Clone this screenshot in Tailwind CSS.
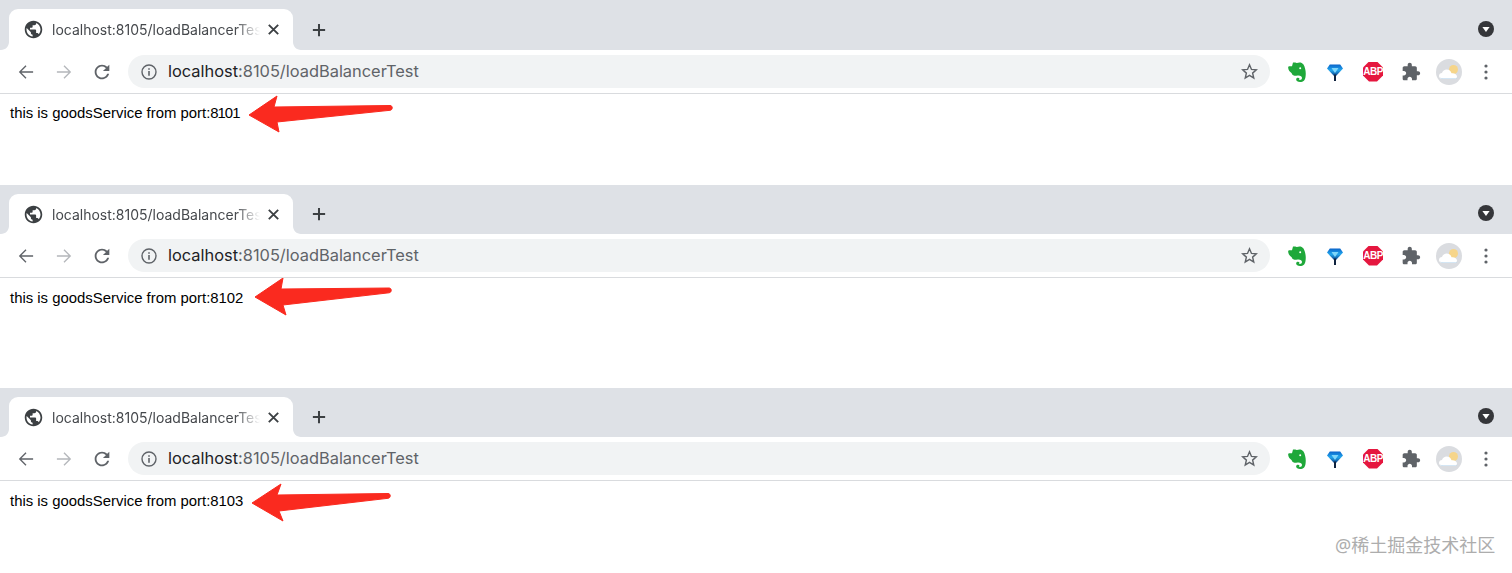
<!DOCTYPE html>
<html lang="en">

<head>
  <meta charset="UTF-8" />
  <meta name="viewport" content="width=device-width, initial-scale=1" />
  <title>loadBalancerTest</title>
  <script src="https://cdn.jsdelivr.net/npm/@tailwindcss/browser@4"></script>
</head>

<body class="relative bg-white h-[573px] overflow-hidden font-['Inter','Noto_Sans',sans-serif]">

  <!-- shared icons -->
  <svg class="absolute w-0 h-0" xmlns="http://www.w3.org/2000/svg">
    <defs><linearGradient id="g-diamond" x1="0" y1="0" x2="0" y2="1"><stop offset="0" stop-color="#0a63c9"/><stop offset=".5" stop-color="#22a7ee"/><stop offset="1" stop-color="#0b3f86"/></linearGradient></defs>
    <symbol id="i-globe" viewBox="0 0 24 24"><path fill="#3c4043" d="M12 2C6.48 2 2 6.48 2 12s4.48 10 10 10 10-4.48 10-10S17.52 2 12 2zm-1 17.93c-3.95-.49-7-3.85-7-7.93 0-.62.08-1.21.21-1.79L9 15v1c0 1.1.9 2 2 2v1.93zm6.9-2.54c-.26-.81-1-1.39-1.9-1.39h-1v-3c0-.55-.45-1-1-1H8v-2h2c.55 0 1-.45 1-1V7h2c1.1 0 2-.9 2-2v-.41c2.93 1.19 5 4.06 5 7.41 0 2.08-.8 3.97-2.1 5.39z"/></symbol>
    <symbol id="i-close" viewBox="0 0 16 16"><path fill="none" stroke="#3c4043" stroke-width="2" d="M3 3l10 10M13 3L3 13"/></symbol>
    <symbol id="i-plus" viewBox="0 0 16 16"><path fill="none" stroke="#3c4043" stroke-width="2.300" d="M8 1v14M1 8h14"/></symbol>
    <symbol id="i-caret" viewBox="0 0 16 16"><circle cx="8" cy="8" r="8" fill="#35363a"/><path fill="#fff" d="M4.4 6h7.2L8 11z"/></symbol>
    <symbol id="i-back" viewBox="0 0 18 18"><path fill="none" stroke="currentColor" stroke-width="1.5" d="M17 9H2M9 2L2 9l7 7"/></symbol>
    <symbol id="i-forward" viewBox="0 0 18 18"><path fill="none" stroke="currentColor" stroke-width="1.5" d="M1 9h15M9 2l7 7-7 7"/></symbol>
    <symbol id="i-reload" viewBox="0 0 24 24"><path fill="#5f6368" d="M17.65 6.35C16.2 4.9 14.21 4 12 4c-4.42 0-7.99 3.58-7.99 8s3.57 8 7.99 8c3.73 0 6.84-2.55 7.73-6h-2.08c-.82 2.33-3.04 4-5.65 4-3.31 0-6-2.69-6-6s2.69-6 6-6c1.66 0 3.14.69 4.22 1.78L13 11h7V4l-2.35 2.35z"/></symbol>
    <symbol id="i-info" viewBox="0 0 16 16"><circle cx="8" cy="8" r="7" fill="none" stroke="#5f6368" stroke-width="1.4"/><path fill="#5f6368" d="M7.2 7h1.6v4.8H7.2zM7.2 4.2h1.6v1.6H7.2z"/></symbol>
    <symbol id="i-star" viewBox="0 0 18 18"><path fill="none" stroke="#5f6368" stroke-width="1.5" stroke-linejoin="miter" d="M9 1.9l2.1 4.9 5.2.4-4 3.5 1.2 5.2L9 13.1l-4.5 2.8 1.2-5.2-4-3.5 5.2-.4z"/></symbol>
    <symbol id="i-evernote" viewBox="0 0 18 20"><path fill="#1fa83a" d="M5 .6C7 .2 8.500 .8 9 1c2-1 5-.8 6.500 1.500C17.500 6 18.200 11 17.500 15c-.4 3-2 5-5.500 5-2.500 0-4.200-1.200-3.800-3 .3-1.500 2.700-1.800 3.200-.5.2.6 0 1-.4 1.300 1.200.5 3-.1 3-1.800 0-1.600-1.400-2.200-3.500-2.500-1.500-.2-3 .3-4 .2C4.500 13.500 4 12 3.500 11 2 10 .3 8 .2 6 .1 5 .3 4.300 1 4.200h3z"/><circle cx="12.200" cy="6.200" r="1" fill="#fff"/></symbol>
    <symbol id="i-diamond" viewBox="0 0 18 18"><path fill="url(#g-diamond)" d="M3.800 1.500h10.400L17 5.600 10 13H8L1 5.600z"/><path fill="#7fd6fa" d="M5.500 5h7L9 10z"/><path fill="#10233f" d="M8 11.500h2V18H8z"/></symbol>
    <symbol id="i-puzzle" viewBox="0 0 24 24"><path fill="#5f6368" d="M20.5 11H19V7c0-1.100-.9-2-2-2h-4V3.500C13 2.120 11.880 1 10.500 1S8 2.120 8 3.500V5H4c-1.100 0-1.990.9-1.990 2v3.800H3.500c1.490 0 2.700 1.210 2.700 2.700s-1.210 2.700-2.700 2.700H2V20c0 1.100.9 2 2 2h3.800v-1.500c0-1.490 1.210-2.700 2.700-2.700 1.490 0 2.700 1.210 2.700 2.700V22H17c1.100 0 2-.9 2-2v-4h1.500c1.380 0 2.500-1.120 2.500-2.500S21.880 11 20.500 11z"/></symbol>
    <symbol id="i-weather" viewBox="0 0 26 26"><circle cx="13" cy="13" r="13" fill="#dadce0"/><circle cx="17.500" cy="10.500" r="4.500" fill="#f6d58a"/><path fill="#fff" d="M6.500 20c-2.300 0-3.500-1.500-3.500-3 0-1.700 1.300-3 3-3 .7-2.200 2.500-3.500 4.700-3.500 2.400 0 4.300 1.500 4.800 3.700 2.800-.4 5.500.9 5.500 3.200 0 1.600-1.200 2.600-3 2.600z"/><path fill="#a9cdea" d="M4 18.600c1 .7 2 .9 3 .9h12c1 0 1.700-.3 2.300-.9-.3 1-1.200 1.400-2.300 1.400H6.500c-1.100 0-2-.5-2.500-1.400z"/></symbol>
    <symbol id="i-menu" viewBox="0 0 4 16"><circle cx="2" cy="2" r="1.600" fill="#5f6368"/><circle cx="2" cy="8" r="1.600" fill="#5f6368"/><circle cx="2" cy="14" r="1.600" fill="#5f6368"/></symbol>
    <symbol id="i-flare" viewBox="0 0 8 8"><path fill="#fff" d="M0 8h8V0c0 4.400-3.600 8-8 8z"/></symbol>
  </svg>

  <!-- window 1 -->
  <section class="h-[185px] flex flex-col">
    <div class="h-[50px] bg-[#dee1e6] flex items-end shrink-0">
      <div class="relative ml-[9px] w-[284px] h-[41px] bg-white rounded-t-[9px] flex items-center pl-[14px] pr-[12px]">
        <svg class="absolute left-[-8px] bottom-0 w-2 h-2"><use href="#i-flare" /></svg>
        <svg class="absolute right-[-8px] bottom-0 w-2 h-2 -scale-x-100"><use href="#i-flare" /></svg>
        <svg class="w-[21px] h-[21px] shrink-0"><use href="#i-globe" /></svg>
        <span class="ml-[8px] w-[208px] overflow-hidden whitespace-nowrap text-[14px] text-[#45484c] mask-r-from-[88%] mask-r-to-100%">localhost:8105/loadBalancerTest</span>
        <svg class="ml-auto w-[15px] h-[15px] shrink-0"><use href="#i-close" /></svg>
      </div>
      <svg class="ml-[19px] mb-[13px] w-[14px] h-[14px]"><use href="#i-plus" /></svg>
      <svg class="ml-auto mr-[18px] mb-[13px] w-4 h-4"><use href="#i-caret" /></svg>
    </div>
    <div class="h-[43px] bg-white flex items-center shrink-0">
      <svg class="ml-[18px] w-4 h-4 text-[#5f6368]"><use href="#i-back" /></svg>
      <svg class="ml-[22px] w-4 h-4 text-[#b4b7bb]"><use href="#i-forward" /></svg>
      <svg class="ml-[19px] w-[22px] h-[22px]"><use href="#i-reload" /></svg>
      <div class="ml-[15px] w-[1142px] h-[33px] rounded-full bg-[#f1f3f4] flex items-center pl-[13px] pr-[12px]">
        <svg class="w-4 h-4 shrink-0"><use href="#i-info" /></svg>
        <span class="ml-[11px] -mt-px text-[16.400px] text-[#5f6368] whitespace-nowrap"><span class="text-[#202124]">localhost</span>:8105/loadBalancerTest</span>
        <svg class="ml-auto w-[17px] h-[17px] shrink-0"><use href="#i-star" /></svg>
      </div>
      <svg class="ml-[18px] w-[18px] h-[20px]"><use href="#i-evernote" /></svg>
      <svg class="ml-[20px] w-[18px] h-[18px]"><use href="#i-diamond" /></svg>
      <div class="ml-[19px] w-5 h-5 bg-[#e5173f] [clip-path:polygon(30%_0,70%_0,100%_30%,100%_70%,70%_100%,30%_100%,0_70%,0_30%)] flex items-center justify-center text-white text-[10px] font-bold font-['Liberation_Sans',sans-serif] tracking-tighter">ABP</div>
      <svg class="ml-[18px] w-[20px] h-[20px]"><use href="#i-puzzle" /></svg>
      <svg class="ml-[15px] w-[26px] h-[26px]"><use href="#i-weather" /></svg>
      <svg class="ml-[22px] w-1 h-4"><use href="#i-menu" /></svg>
    </div>
    <div class="relative flex-1 bg-white border-t border-[#d9dbde] pl-[10px] pt-[10px] text-[14.900px] leading-[18px] text-black font-['Liberation_Sans',sans-serif]">
      this is goodsService from port:<span class="tracking-[-1px]">810</span>1
      <svg class="absolute left-0 top-0 w-[420px] h-[60px]" viewBox="0 0 420 60"><path fill="#fa2a1f" stroke="#fa2a1f" stroke-width="1" stroke-linejoin="round" d="M249 21L277 2l-3 11 116-1.500c3 0 3 4.500 0 4.800L277 28l2 10z"/></svg>
    </div>
  </section>

  <!-- window 2 -->
  <section class="h-[203px] flex flex-col">
    <div class="h-[49px] bg-[#dee1e6] flex items-end shrink-0">
      <div class="relative ml-[9px] w-[284px] h-[40px] bg-white rounded-t-[9px] flex items-center pl-[14px] pr-[12px]">
        <svg class="absolute left-[-8px] bottom-0 w-2 h-2"><use href="#i-flare" /></svg>
        <svg class="absolute right-[-8px] bottom-0 w-2 h-2 -scale-x-100"><use href="#i-flare" /></svg>
        <svg class="w-[21px] h-[21px] shrink-0"><use href="#i-globe" /></svg>
        <span class="ml-[8px] w-[208px] overflow-hidden whitespace-nowrap text-[14px] text-[#45484c] mask-r-from-[88%] mask-r-to-100%">localhost:8105/loadBalancerTest</span>
        <svg class="ml-auto w-[15px] h-[15px] shrink-0"><use href="#i-close" /></svg>
      </div>
      <svg class="ml-[19px] mb-[13px] w-[14px] h-[14px]"><use href="#i-plus" /></svg>
      <svg class="ml-auto mr-[18px] mb-[13px] w-4 h-4"><use href="#i-caret" /></svg>
    </div>
    <div class="h-[43px] bg-white flex items-center shrink-0">
      <svg class="ml-[18px] w-4 h-4 text-[#5f6368]"><use href="#i-back" /></svg>
      <svg class="ml-[22px] w-4 h-4 text-[#b4b7bb]"><use href="#i-forward" /></svg>
      <svg class="ml-[19px] w-[22px] h-[22px]"><use href="#i-reload" /></svg>
      <div class="ml-[15px] w-[1142px] h-[33px] rounded-full bg-[#f1f3f4] flex items-center pl-[13px] pr-[12px]">
        <svg class="w-4 h-4 shrink-0"><use href="#i-info" /></svg>
        <span class="ml-[11px] -mt-px text-[16.400px] text-[#5f6368] whitespace-nowrap"><span class="text-[#202124]">localhost</span>:8105/loadBalancerTest</span>
        <svg class="ml-auto w-[17px] h-[17px] shrink-0"><use href="#i-star" /></svg>
      </div>
      <svg class="ml-[18px] w-[18px] h-[20px]"><use href="#i-evernote" /></svg>
      <svg class="ml-[20px] w-[18px] h-[18px]"><use href="#i-diamond" /></svg>
      <div class="ml-[19px] w-5 h-5 bg-[#e5173f] [clip-path:polygon(30%_0,70%_0,100%_30%,100%_70%,70%_100%,30%_100%,0_70%,0_30%)] flex items-center justify-center text-white text-[10px] font-bold font-['Liberation_Sans',sans-serif] tracking-tighter">ABP</div>
      <svg class="ml-[18px] w-[20px] h-[20px]"><use href="#i-puzzle" /></svg>
      <svg class="ml-[15px] w-[26px] h-[26px]"><use href="#i-weather" /></svg>
      <svg class="ml-[22px] w-1 h-4"><use href="#i-menu" /></svg>
    </div>
    <div class="relative flex-1 bg-white border-t border-[#d9dbde] pl-[10px] pt-[11px] text-[14.900px] leading-[18px] text-black font-['Liberation_Sans',sans-serif]">
      this is goodsService from port:8102
      <svg class="absolute left-0 top-0 w-[420px] h-[60px]" viewBox="0 0 420 60"><path fill="#fa2a1f" stroke="#fa2a1f" stroke-width="1" stroke-linejoin="round" d="M255 19L283 0l-2 11 108-1c3 0 3 4.500 0 4.800L283 27l3 10z"/></svg>
    </div>
  </section>

  <!-- window 3 -->
  <section class="h-[185px] flex flex-col">
    <div class="h-[49px] bg-[#dee1e6] flex items-end shrink-0">
      <div class="relative ml-[9px] w-[284px] h-[40px] bg-white rounded-t-[9px] flex items-center pl-[14px] pr-[12px]">
        <svg class="absolute left-[-8px] bottom-0 w-2 h-2"><use href="#i-flare" /></svg>
        <svg class="absolute right-[-8px] bottom-0 w-2 h-2 -scale-x-100"><use href="#i-flare" /></svg>
        <svg class="w-[21px] h-[21px] shrink-0"><use href="#i-globe" /></svg>
        <span class="ml-[8px] w-[208px] overflow-hidden whitespace-nowrap text-[14px] text-[#45484c] mask-r-from-[88%] mask-r-to-100%">localhost:8105/loadBalancerTest</span>
        <svg class="ml-auto w-[15px] h-[15px] shrink-0"><use href="#i-close" /></svg>
      </div>
      <svg class="ml-[19px] mb-[13px] w-[14px] h-[14px]"><use href="#i-plus" /></svg>
      <svg class="ml-auto mr-[18px] mb-[13px] w-4 h-4"><use href="#i-caret" /></svg>
    </div>
    <div class="h-[43px] bg-white flex items-center shrink-0">
      <svg class="ml-[18px] w-4 h-4 text-[#5f6368]"><use href="#i-back" /></svg>
      <svg class="ml-[22px] w-4 h-4 text-[#b4b7bb]"><use href="#i-forward" /></svg>
      <svg class="ml-[19px] w-[22px] h-[22px]"><use href="#i-reload" /></svg>
      <div class="ml-[15px] w-[1142px] h-[33px] rounded-full bg-[#f1f3f4] flex items-center pl-[13px] pr-[12px]">
        <svg class="w-4 h-4 shrink-0"><use href="#i-info" /></svg>
        <span class="ml-[11px] -mt-px text-[16.400px] text-[#5f6368] whitespace-nowrap"><span class="text-[#202124]">localhost</span>:8105/loadBalancerTest</span>
        <svg class="ml-auto w-[17px] h-[17px] shrink-0"><use href="#i-star" /></svg>
      </div>
      <svg class="ml-[18px] w-[18px] h-[20px]"><use href="#i-evernote" /></svg>
      <svg class="ml-[20px] w-[18px] h-[18px]"><use href="#i-diamond" /></svg>
      <div class="ml-[19px] w-5 h-5 bg-[#e5173f] [clip-path:polygon(30%_0,70%_0,100%_30%,100%_70%,70%_100%,30%_100%,0_70%,0_30%)] flex items-center justify-center text-white text-[10px] font-bold font-['Liberation_Sans',sans-serif] tracking-tighter">ABP</div>
      <svg class="ml-[18px] w-[20px] h-[20px]"><use href="#i-puzzle" /></svg>
      <svg class="ml-[15px] w-[26px] h-[26px]"><use href="#i-weather" /></svg>
      <svg class="ml-[22px] w-1 h-4"><use href="#i-menu" /></svg>
    </div>
    <div class="relative flex-1 bg-white border-t border-[#d9dbde] pl-[10px] pt-[11px] text-[14.900px] leading-[18px] text-black font-['Liberation_Sans',sans-serif]">
      this is goodsService from port:8103
      <svg class="absolute left-0 top-0 w-[420px] h-[60px]" viewBox="0 0 420 60"><path fill="#fa2a1f" stroke="#fa2a1f" stroke-width="1" stroke-linejoin="round" d="M252 22L281 3l-4 11 111-1.500c3 0 3 4.500 0 4.800L279 30l4 10z"/></svg>
    </div>
  </section>

  <!-- watermark -->
  <div class="absolute left-[1335px] top-[534px] text-[18px] leading-[22px] text-[#adadad] whitespace-nowrap font-['Noto_Sans','Noto_Sans_CJK_SC',sans-serif]">@稀土掘金技术社区</div>

</body>

</html>
